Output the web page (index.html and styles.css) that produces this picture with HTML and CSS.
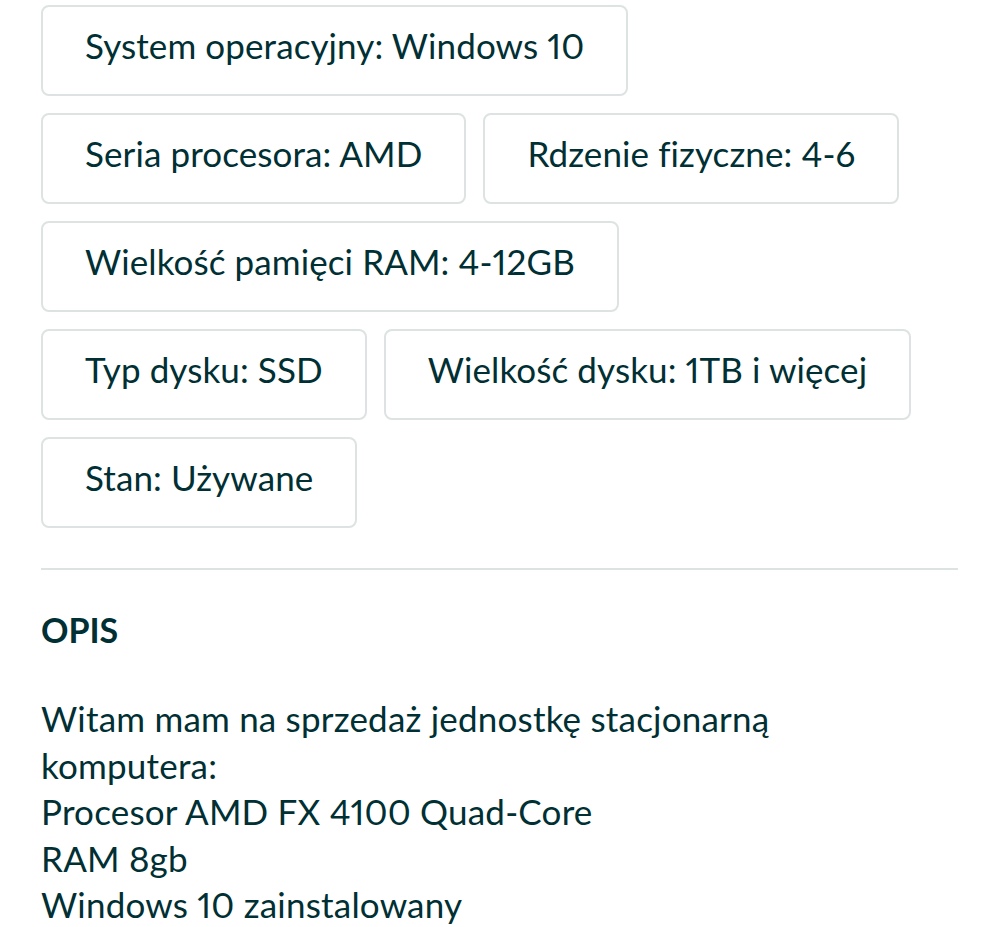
FILE: index.html
```html
<!DOCTYPE html>
<html lang="pl">
<head>
<meta charset="utf-8">
<link rel="stylesheet" href="styles.css">
</head>
<body>
<main class="page">
  <div class="params">
    <div class="row">
      <span class="chip">System operacyjny: Windows 10</span>
    </div>
    <div class="row">
      <span class="chip">Seria procesora: AMD</span>
      <span class="chip">Rdzenie fizyczne: 4-6</span>
    </div>
    <div class="row">
      <span class="chip">Wielkość pamięci RAM: 4-12GB</span>
    </div>
    <div class="row">
      <span class="chip">Typ dysku: SSD</span>
      <span class="chip">Wielkość dysku: 1TB i więcej</span>
    </div>
    <div class="row">
      <span class="chip">Stan: Używane</span>
    </div>
  </div>
  <hr class="divider">
  <h2 class="title">OPIS</h2>
  <p class="desc">Witam mam na sprzedaż jednostkę stacjonarną<br>komputera:<br>Procesor AMD FX 4100 Quad-Core<br>RAM 8gb<br>Windows 10 zainstalowany</p>
</main>
</body>
</html>
```

FILE: styles.css
```css
html, body {
  margin: 0;
  padding: 0;
  background: #ffffff;
}
body {
  font-family: Lato, "Open Sans", sans-serif;
  color: #002f34;
  font-variant-numeric: proportional-nums;
  font-feature-settings: "pnum" 1;
}
.page {
  padding: 5px 41px 0 41px;
  width: 917px;
}
.params {
  display: flex;
  flex-direction: column;
  gap: 17px;
}
.row {
  display: flex;
  gap: 17px;
}
.chip {
  box-sizing: border-box;
  height: 91px;
  display: flex;
  align-items: center;
  padding: 0 42px 12px 42px;
  border: 2px solid #dde2e3;
  border-radius: 8px;
  font-size: 35px;
  letter-spacing: 0.1px;
  white-space: nowrap;
}
.divider {
  border: 0;
  border-top: 2px solid #dde2e3;
  margin: 40px 0 0 0;
  width: 917px;
}
.title {
  margin: 40px 0 0 0;
  font-size: 34px;
  font-weight: 700;
  line-height: 40px;
}
.desc {
  margin: 45px 0 0 0;
  font-size: 35px;
  line-height: 46.5px;
  letter-spacing: 0.2px;
}
```
